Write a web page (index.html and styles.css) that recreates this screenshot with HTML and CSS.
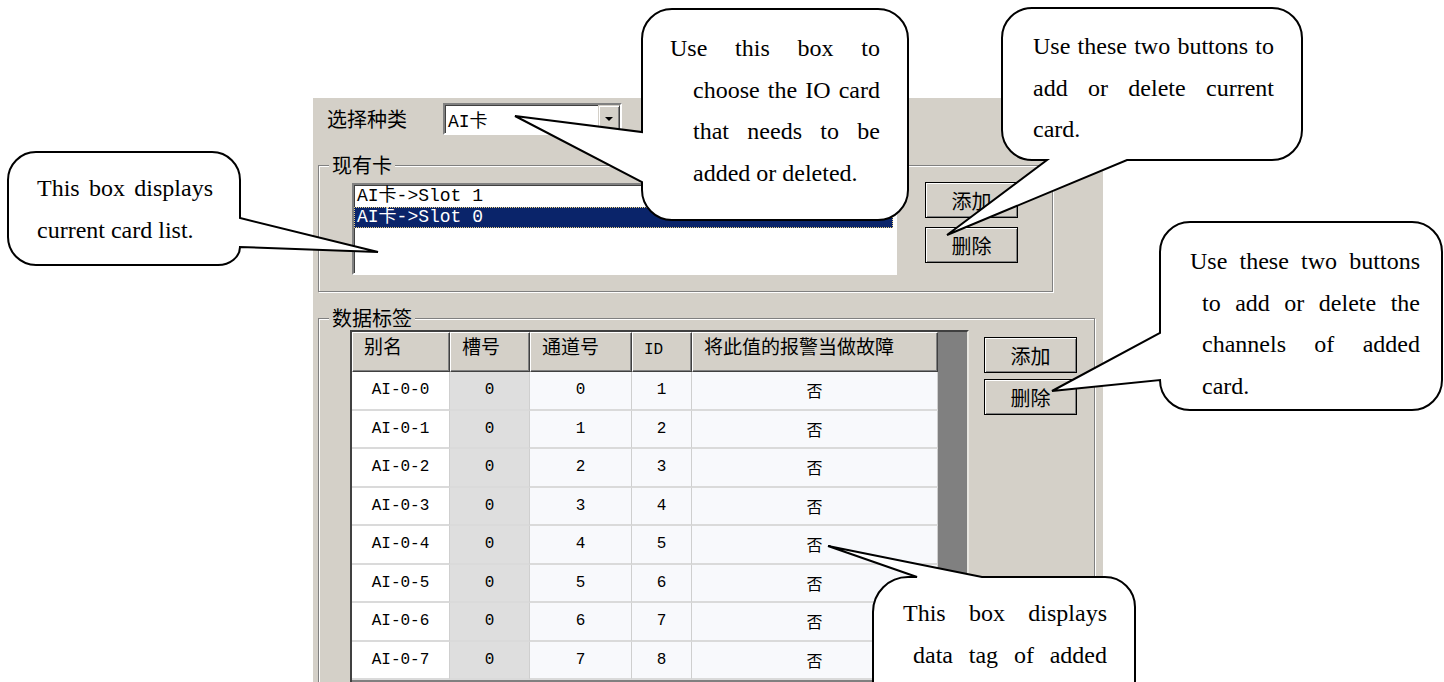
FILE: index.html
```html
<!DOCTYPE html>
<html lang="zh-CN">
<head>
    <meta charset="UTF-8">
    <title>IO 卡配置</title>
    <link rel="stylesheet" href="styles.css">
</head>
<body>

    <div class="dialog">
        <div class="kind-row">
            <span class="kind-label">选择种类</span>
            <div class="combo">
                <span class="combo-text">AI卡</span>
                <span class="combo-btn"><span class="arrow"></span></span>
            </div>
        </div>

        <div class="group group-cards">
            <span class="legend">现有卡</span>
            <ul class="listbox">
                <li>AI卡-&gt;Slot 1</li>
                <li class="selected">AI卡-&gt;Slot 0</li>
            </ul>
            <div class="btn-col">
                <button>添加</button>
                <button>删除</button>
            </div>
        </div>

        <div class="group group-tags">
            <span class="legend">数据标签</span>
            <div class="grid">
                <table class="tags">
                    <thead>
                        <tr>
                            <th class="c-name">别名</th>
                            <th class="c-slot">槽号</th>
                            <th class="c-chan">通道号</th>
                            <th class="c-id"><span class="mono">ID</span></th>
                            <th class="c-fault">将此值的报警当做故障</th>
                        </tr>
                    </thead>
                    <tbody>
                        <tr><td>AI-0-0</td><td>0</td><td>0</td><td>1</td><td>否</td></tr>
                        <tr><td>AI-0-1</td><td>0</td><td>1</td><td>2</td><td>否</td></tr>
                        <tr><td>AI-0-2</td><td>0</td><td>2</td><td>3</td><td>否</td></tr>
                        <tr><td>AI-0-3</td><td>0</td><td>3</td><td>4</td><td>否</td></tr>
                        <tr><td>AI-0-4</td><td>0</td><td>4</td><td>5</td><td>否</td></tr>
                        <tr><td>AI-0-5</td><td>0</td><td>5</td><td>6</td><td>否</td></tr>
                        <tr><td>AI-0-6</td><td>0</td><td>6</td><td>7</td><td>否</td></tr>
                        <tr><td>AI-0-7</td><td>0</td><td>7</td><td>8</td><td>否</td></tr>
                    </tbody>
                </table>
            </div>
            <div class="btn-col">
                <button>添加</button>
                <button>删除</button>
            </div>
        </div>
    </div>

    <!-- callout bubbles -->
    <svg class="callouts" width="1444" height="682" viewBox="0 0 1444 682">
        <path class="bubble" d="M672 9H878A30 30 0 0 1 908 39V190A30 30 0 0 1 878 220H672A30 30 0 0 1 642 190V182L515 116L642 132V39A30 30 0 0 1 672 9Z"/>
        <path class="bubble" d="M1032 8H1272A30 30 0 0 1 1302 38V130A30 30 0 0 1 1272 160H1127L947 235L1047 160H1032A30 30 0 0 1 1002 130V38A30 30 0 0 1 1032 8Z"/>
        <path class="bubble" d="M1190 222H1412A30 30 0 0 1 1442 252V380A30 30 0 0 1 1412 410H1190A30 30 0 0 1 1160 380L1052 391L1160 333V252A30 30 0 0 1 1190 222Z"/>
        <path class="bubble" d="M36 152H212A28 28 0 0 1 240 180V218L378 252L240 247A22 18 0 0 1 218 265H36A28 28 0 0 1 8 237V180A28 28 0 0 1 36 152Z"/>
        <path class="bubble" d="M873 720V612A35 35 0 0 1 908 577H917L828 546L982 577H1105A30 30 0 0 1 1135 607V720Z"/>
    </svg>

    <div class="note note-choose">
        <div>Use this box to</div>
        <div class="ind">choose the IO card</div>
        <div class="ind">that needs to be</div>
        <div class="ind last">added or deleted.</div>
    </div>

    <div class="note note-card">
        <div>Use these two buttons to</div>
        <div>add or delete current</div>
        <div class="last">card.</div>
    </div>

    <div class="note note-channel">
        <div>Use these two buttons</div>
        <div class="ind">to add or delete the</div>
        <div class="ind">channels of added</div>
        <div class="ind last">card.</div>
    </div>

    <div class="note note-list">
        <div>This box displays</div>
        <div class="last">current card list.</div>
    </div>

    <div class="note note-tag">
        <div>This box displays</div>
        <div class="ind">data tag of added</div>
    </div>

</body>
</html>
```

FILE: styles.css
```css
html, body {
    margin: 0;
    height: 682px;
    overflow: hidden;
}

body {
    background-color: #ffffff;
    padding: 98px 0 0 313px;
    box-sizing: border-box;
    font-family: "Noto Sans CJK SC", sans-serif;
    color: #000;
}

.dialog {
    width: 790px;
    height: 640px;
    padding-top: 5px;
    box-sizing: border-box;
    background-color: #d4d0c8;
    overflow: hidden;
}

/* top row: card type */
.kind-row {
    display: flex;
    align-items: center;
    height: 32px;
    padding-left: 14px;
}

.kind-label {
    width: 116px;
    font-size: 20px;
    line-height: 20px;
}

.combo {
    width: 179px;
    height: 32px;
    box-sizing: border-box;
    display: flex;
    align-items: center;
    justify-content: space-between;
    padding-left: 3px;
    background-color: #fff;
    border: 2px solid;
    border-color: #808080 #fff #fff #808080;
    box-shadow: inset 1px 1px 0 #404040;
}

.combo-text {
    font: 18px "Liberation Mono", "Noto Sans CJK SC", monospace;
}

.combo-btn {
    width: 22px;
    height: 28px;
    box-sizing: border-box;
    display: flex;
    align-items: center;
    justify-content: center;
    background-color: #d4d0c8;
    border: 1px solid;
    border-color: #d4d0c8 #404040 #404040 #d4d0c8;
    box-shadow: inset 1px 1px 0 #fff, inset -1px -1px 0 #808080;
}

.arrow {
    width: 0;
    height: 0;
    border-left: 4px solid transparent;
    border-right: 4px solid transparent;
    border-top: 4px solid #000;
}

/* group boxes */
.group {
    position: relative;
    display: flex;
    align-items: flex-start;
    margin-left: 5px;
    box-sizing: border-box;
    border: 1px solid #808080;
    box-shadow: inset 1px 1px 0 #fff, 1px 1px 0 #fff;
}

.legend {
    position: absolute;
    top: -11px;
    left: 10px;
    padding: 0 3px;
    font-size: 20px;
    line-height: 20px;
    background-color: #d4d0c8;
}

.group-cards {
    width: 735px;
    margin-top: 30px;
    padding: 17px 0 16px 33px;
}

.group-tags {
    width: 777px;
    height: 420px;
    margin-top: 26px;
    padding: 11px 0 0 31px;
}

.listbox {
    width: 545px;
    height: 92px;
    box-sizing: border-box;
    margin: 0;
    padding: 1px 0 0;
    list-style: none;
    background-color: #fff;
    border: 2px solid;
    border-color: #808080 #fff #fff #808080;
    box-shadow: inset 1px 1px 0 #404040;
    font: 18px "Liberation Mono", "Noto Sans CJK SC", monospace;
    line-height: 21px;
}

.listbox li {
    padding-left: 3px;
    margin-right: 2px;
}

.listbox .selected {
    background-color: #0a246a;
    color: #fff;
    outline: 1px dotted #e8d080;
    outline-offset: -1px;
}

.btn-col {
    display: flex;
    flex-direction: column;
}

.group-cards .btn-col {
    margin: -1px 0 0 28px;
    gap: 9px;
}

.group-tags .btn-col {
    margin: 7px 0 0 15px;
    gap: 6px;
}

button {
    width: 93px;
    height: 36px;
    padding: 0;
    font-family: "Noto Sans CJK SC", sans-serif;
    font-size: 20px;
    color: #000;
    background-color: #d4d0c8;
    border: 1px solid #000;
    box-shadow: inset 1px 1px 0 #fff, inset -1px -1px 0 #808080;
}

/* data tag grid */
.grid {
    width: 619px;
    height: 380px;
    box-sizing: border-box;
    border: 2px solid;
    border-color: #404040 #e8e6e0 #e8e6e0 #404040;
    background-color: #808080;
}

.tags {
    width: 586px;
    table-layout: fixed;
    border-collapse: separate;
    border-spacing: 0;
    font: 16px "Liberation Mono", "Noto Sans CJK SC", monospace;
}

.tags th {
    height: 40px;
    box-sizing: border-box;
    padding: 2px 0 0 11px;
    vertical-align: top;
    text-align: left;
    font-family: "Noto Sans CJK SC", sans-serif;
    font-size: 19px;
    font-weight: normal;
    line-height: 22px;
    background-color: #d4d0c8;
    border-top: 1px solid #fff;
    border-left: 1px solid #fff;
    border-right: 1px solid #404040;
    border-bottom: 1px solid #404040;
    box-shadow: inset -1px -1px 0 #808080;
}

.tags th .mono {
    font-family: "Liberation Mono", monospace;
    font-size: 16px;
}

.c-name { width: 98px; }
.c-slot { width: 80px; }
.c-chan { width: 102px; }
.c-id { width: 60px; }
.c-fault { width: 246px; }

.tags tbody tr {
    height: 38.5px;
}

.tags td {
    padding: 0;
    text-align: center;
    vertical-align: middle;
    background-color: #f8f9fc;
    border-right: 1px solid #cfcfcf;
    border-bottom: 2px solid #dadada;
}

.tags td:nth-child(1) {
    background-color: #fff;
}

.tags td:nth-child(2) {
    background-color: #dedede;
}

/* callouts */
.callouts {
    position: absolute;
    top: 0;
    left: 0;
    pointer-events: none;
}

.bubble {
    fill: #fff;
    stroke: #000;
    stroke-width: 2;
    stroke-linejoin: miter;
}

.note {
    position: absolute;
    font-family: "Liberation Serif", serif;
    font-size: 24px;
    line-height: 41.5px;
}

.note div {
    text-align: justify;
    text-align-last: justify;
}

.note .last {
    text-align-last: left;
}

.note-choose {
    left: 670px;
    top: 28px;
    width: 210px;
}

.note-choose .ind {
    padding-left: 23px;
}

.note-card {
    left: 1033px;
    top: 26px;
    width: 241px;
}

.note-channel {
    left: 1190px;
    top: 241px;
    width: 230px;
}

.note-channel .ind {
    padding-left: 12px;
}

.note-list {
    left: 37px;
    top: 168px;
    width: 176px;
}

.note-tag {
    left: 903px;
    top: 593px;
    width: 204px;
}

.note-tag .ind {
    padding-left: 10px;
}
```
